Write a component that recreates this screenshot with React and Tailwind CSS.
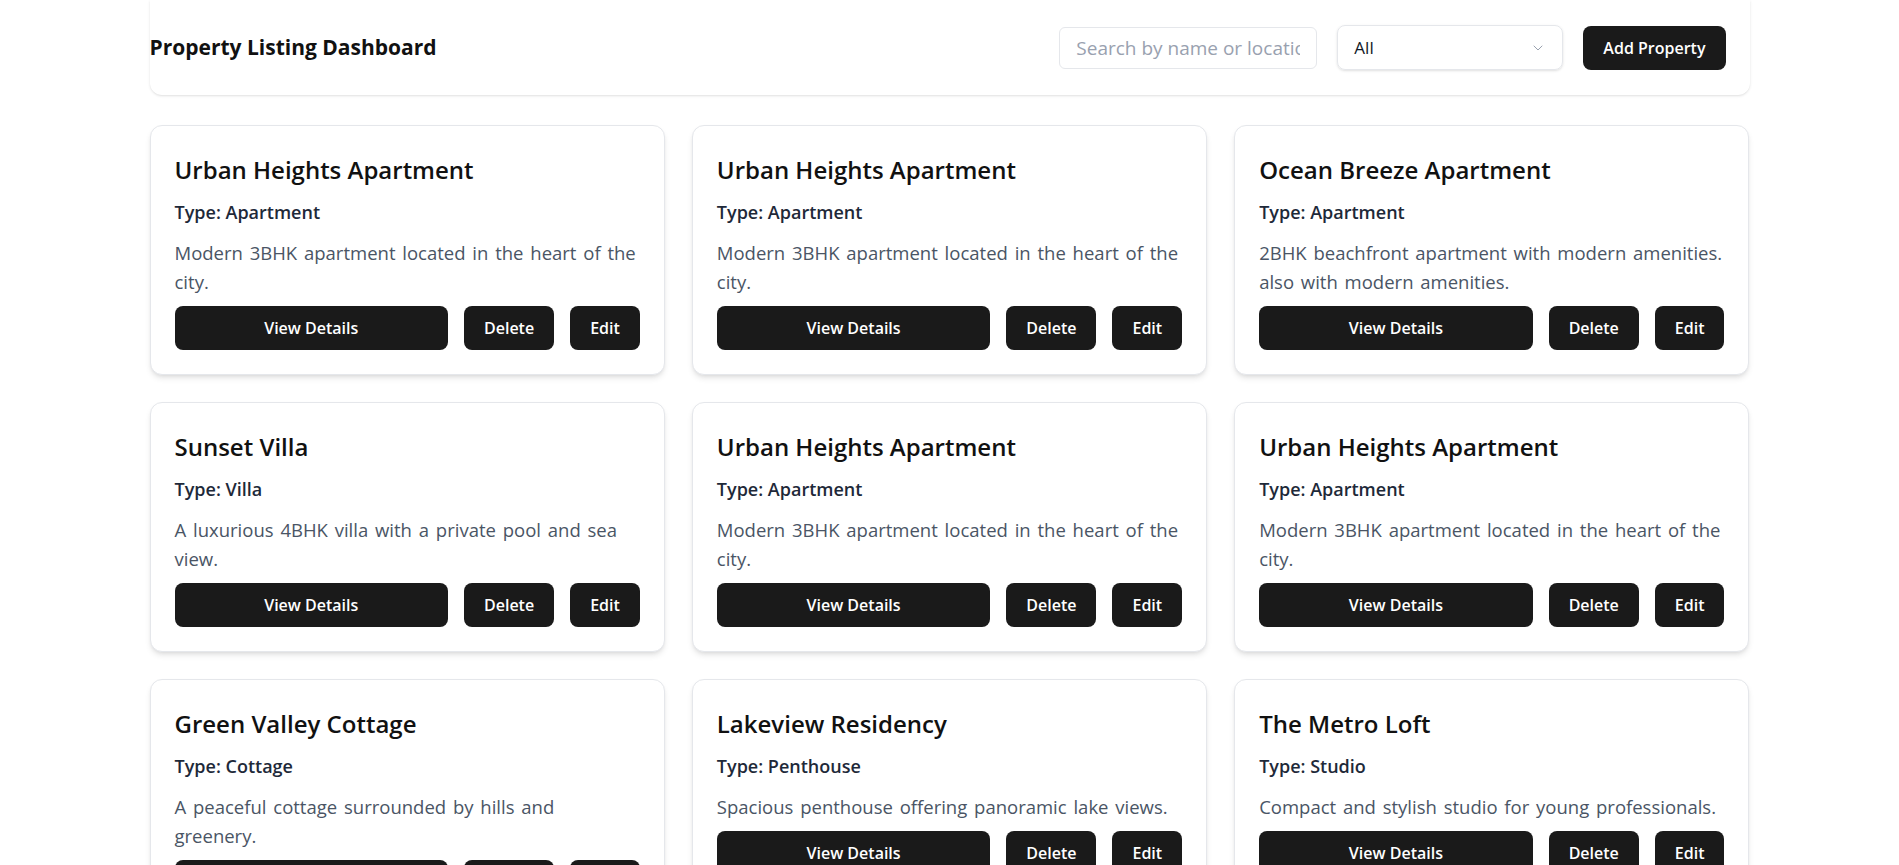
import React, { useState } from "react";
import { ChevronDown } from "lucide-react";

const properties = [
  {
    name: "Urban Heights Apartment",
    type: "Apartment",
    description: "Modern 3BHK apartment located in the heart of the city.",
  },
  {
    name: "Urban Heights Apartment",
    type: "Apartment",
    description: "Modern 3BHK apartment located in the heart of the city.",
  },
  {
    name: "Ocean Breeze Apartment",
    type: "Apartment",
    description: "2BHK beachfront apartment with modern amenities. also with modern amenities.",
  },
  {
    name: "Sunset Villa",
    type: "Villa",
    description: "A luxurious 4BHK villa with a private pool and sea view.",
  },
  {
    name: "Urban Heights Apartment",
    type: "Apartment",
    description: "Modern 3BHK apartment located in the heart of the city.",
  },
  {
    name: "Urban Heights Apartment",
    type: "Apartment",
    description: "Modern 3BHK apartment located in the heart of the city.",
  },
  {
    name: "Green Valley Cottage",
    type: "Cottage",
    description: "A peaceful cottage surrounded by hills and greenery.",
  },
  {
    name: "Lakeview Residency",
    type: "Penthouse",
    description: "Spacious penthouse offering panoramic lake views.",
  },
  {
    name: "The Metro Loft",
    type: "Studio",
    description: "Compact and stylish studio for young professionals.",
  },
];

function PropertyCard({ item }) {
  return (
    <div className="bg-white border border-gray-200 rounded-xl shadow-md pt-7 px-6 pb-6">
      <h2 className="text-2xl leading-8 font-semibold text-[#111] mb-3">{item.name}</h2>
      <p className="text-lg leading-7 font-semibold text-gray-800 mb-3">Type: {item.type}</p>
      <p className="text-[18.5px] leading-[29px] [word-spacing:2px] text-gray-600">{item.description}</p>
      <div className="flex gap-4 mt-2.5">
        <button className="flex-1 h-11 bg-[#1a1a1a] text-white font-semibold rounded-lg">View Details</button>
        <button className="h-11 px-5 bg-[#1a1a1a] text-white font-semibold rounded-lg">Delete</button>
        <button className="h-11 px-5 bg-[#1a1a1a] text-white font-semibold rounded-lg">Edit</button>
      </div>
    </div>
  );
}

export default function App() {
  const [search, setSearch] = useState("");
  const [filter, setFilter] = useState("All");

  return (
    <div className="min-h-screen bg-white font-['Open_Sans',sans-serif]">
      <div className="max-w-[1600px] mx-auto">
        <header className="h-[95px] flex items-center justify-between pr-6 bg-white rounded-b-xl shadow-sm">
          <h1 className="text-[21px] font-bold text-[#111]">Property Listing Dashboard</h1>
          <div className="flex items-center gap-5">
            <input
              value={search}
              onChange={(e) => setSearch(e.target.value)}
              placeholder="Search by name or location"
              className="w-[258px] h-[42px] px-4 text-[19px] border border-gray-200 rounded-md placeholder:text-gray-400 outline-none"
            />
            <div className="relative w-[226px] h-[45px] border border-gray-200 rounded-lg shadow-sm flex items-center px-4">
              <span className="text-[17px] text-gray-900">{filter}</span>
              <ChevronDown size={16} strokeWidth={1.5} className="absolute right-4 text-gray-400" />
              <select
                value={filter}
                onChange={(e) => setFilter(e.target.value)}
                className="absolute inset-0 opacity-0"
              >
                <option>All</option>
                <option>Apartment</option>
                <option>Villa</option>
              </select>
            </div>
            <button className="h-11 px-5 bg-[#1a1a1a] text-white font-semibold rounded-lg">Add Property</button>
          </div>
        </header>

        <div className="grid grid-cols-3 gap-[27px] mt-[30px] pb-10">
          {properties.map((item, index) => (
            <PropertyCard key={index} item={item} />
          ))}
        </div>
      </div>
    </div>
  );
}
